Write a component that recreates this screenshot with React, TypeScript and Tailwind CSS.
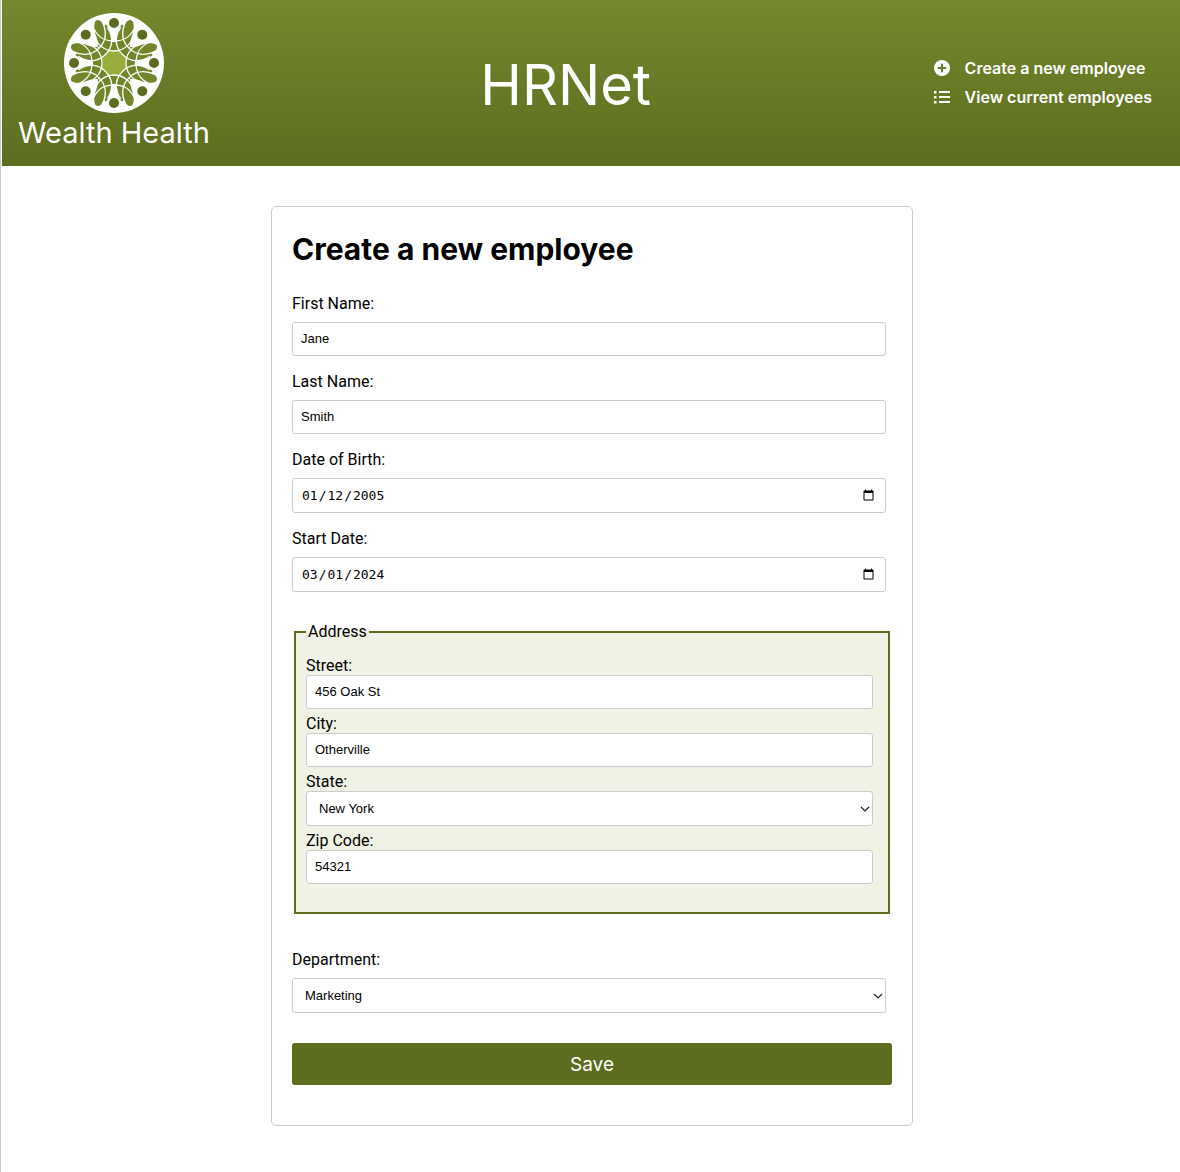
import { useId, type ReactNode } from "react";

const INPUT =
  "block w-full rounded-[3px] border border-[#ccc] bg-white text-[13px] text-black";

function Logo() {
  const angles = [0, 45, 90, 135, 180, 225, 270, 315];
  const quarters = [0, 90, 180, 270];
  return (
    <svg viewBox="-50 -50 100 100" className="size-[100px]" role="img" aria-label="Wealth Health logo">
      <circle r="50" fill="#fff" />
      <circle r="21" fill="#72852b" />
      {quarters.map((a) => (
        <g key={a} transform={`rotate(${a})`} fill="#72852b">
          {[1, -1].map((s) => (
            <path
              key={s}
              transform={`scale(${s} 1)`}
              d="M5.300 -12.700L2.500 -22C2.500 -28 4 -34 8 -38.500L10.500 -37C12 -42.500 16 -44.500 18.500 -42C20.500 -38 20 -32 17.500 -26C16.500 -23 16 -20 16 -16C13 -17 10 -15 5.300 -12.700Z"
            />
          ))}
        </g>
      ))}
      <polygon points="-5,-12 5,-12 12,-5 12,5 5,12 -5,12 -12,5 -12,-5" fill="#98ad3b" />
      <g fill="none" stroke="#fff" strokeWidth="1.300">
        {quarters.map((a) => (
          <g key={a} transform={`rotate(${a})`}>
            <path d="M-20 -32A20 20 0 0 0 20 -32" />
            <path d="M-20 -34C-15 -24 -8 -22 0 -22C8 -22 15 -24 20 -34" />
            <g transform="rotate(45)">
              <path d="M-20.500 -30C-18 -17 -9 -12 0 -12C9 -12 18 -17 20.500 -30" />
              <path d="M-21 -37C-16 -25 -8 -21 0 -21C8 -21 16 -25 21 -37" />
            </g>
          </g>
        ))}
      </g>
      {angles.map((a) => (
        <circle key={a} cy="-40" r="5" fill="#5c6d1f" transform={`rotate(${a})`} />
      ))}
    </svg>
  );
}

function Field({ label, tight, children }: { label: string; tight?: boolean; children: (id: string) => ReactNode }) {
  const id = useId();
  return (
    <div className={tight ? "mb-1.5" : "mb-4"}>
      <label htmlFor={id} className={tight ? "block leading-[18px]" : "mb-2 block leading-5"}>
        {label}
      </label>
      {children(id)}
    </div>
  );
}

function TextField({ label, value, tight }: { label: string; value: string; tight?: boolean }) {
  return (
    <Field label={label} tight={tight}>
      {(id) => <input id={id} type="text" defaultValue={value} className={`${INPUT} h-[34px] px-2 pb-0.5 font-['Liberation_Sans',sans-serif]`} />}
    </Field>
  );
}

function DateField({ label, value }: { label: string; value: string }) {
  return (
    <Field label={label}>
      {(id) => <input id={id} type="date" defaultValue={value} className={`${INPUT} h-[35px] px-2 font-['DejaVu_Sans_Mono',monospace]`} />}
    </Field>
  );
}

function SelectField({ label, options, tight }: { label: string; options: string[]; tight?: boolean }) {
  return (
    <Field label={label} tight={tight}>
      {(id) => (
        <div className="relative">
          <select id={id} className={`${INPUT} h-[35px] appearance-none px-3 font-['Liberation_Sans',sans-serif]`}>
            {options.map((o) => (
              <option key={o}>{o}</option>
            ))}
          </select>
          <svg viewBox="0 0 10 6" className="pointer-events-none absolute top-[15px] right-[3px] h-1.5 w-2.5 fill-none stroke-[#222]" strokeWidth="1.200" aria-hidden="true">
            <path d="M1 1l4 4l4-4" />
          </svg>
        </div>
      )}
    </Field>
  );
}

export default function App() {
  return (
    <div className="min-h-screen border-l border-[#ccc] bg-white pl-px font-[Inter,sans-serif] text-black">
      <header className="flex h-[166px] items-center justify-between bg-linear-to-b from-[#75882c] to-[#5c6d1f] pr-7 pl-4 text-white">
        <div className="flex flex-col items-center pb-0.5">
          <Logo />
          <span className="text-[29px] leading-[39px]">Wealth Health</span>
        </div>
        <h1 className="pt-1 pr-3 text-[56px] leading-[72px]">HRNet</h1>
        <nav className="flex flex-col gap-[9px] pb-0.5 leading-5 font-semibold">
          <a href="#create" className="flex items-center gap-[15px]">
            <svg viewBox="0 0 512 512" className="size-4 fill-current" aria-hidden="true">
              <path fillRule="evenodd" d="M256 0a256 256 0 1 0 0 512a256 256 0 1 0 0-512zM222 120h68v102h102v68h-102v102h-68v-102h-102v-68h102z" />
            </svg>
            Create a new employee
          </a>
          <a href="#list" className="flex items-center gap-[15px]">
            <svg viewBox="0 0 16 16" className="size-4 fill-current" aria-hidden="true">
              <path d="M0 2h2.500v2.500H0zM0 7h2.500v2.500H0zM0 12h2.500v2.500H0zM5 2h11v2H5zM5 7h11v2H5zM5 12h11v2H5z" />
            </svg>
            View current employees
          </a>
        </nav>
      </header>

      <div className="pt-10 pb-11 pl-0.5">
        <main className="mx-auto max-w-[642px] rounded-[5px] border border-[#ccc] px-5 pt-[22px] pb-10">
          <h2 className="mb-[25px] text-[30px] leading-10 font-bold">Create a new employee</h2>
          <form className="font-[Roboto,sans-serif] text-base">
            <div className="pr-1.5">
              <TextField label="First Name:" value="Jane" />
              <TextField label="Last Name:" value="Smith" />
              <DateField label="Date of Birth:" value="2005-01-12" />
              <DateField label="Start Date:" value="2024-03-01" />
            </div>
            <fieldset className="mx-0.5 mt-[30px] mb-9 border-2 border-[#5c6d1f] bg-[#f0f2e5] px-2.5 pb-[22px]">
              <legend className="px-0.5 leading-5">Address</legend>
              <div className="pt-[15px] pr-[5px]">
                <TextField tight label="Street:" value="456 Oak St" />
                <TextField tight label="City:" value="Otherville" />
                <SelectField tight label="State:" options={["New York", "California", "Texas"]} />
                <TextField tight label="Zip Code:" value="54321" />
              </div>
            </fieldset>
            <div className="pr-1.5">
              <SelectField label="Department:" options={["Marketing", "Sales", "Engineering"]} />
            </div>
            <button type="button" className="mt-[30px] block h-[42px] w-full rounded-[3px] bg-[#5c6d1f] pt-0.5 font-[Inter,sans-serif] text-[19px] text-white">
              Save
            </button>
          </form>
        </main>
      </div>
    </div>
  );
}
